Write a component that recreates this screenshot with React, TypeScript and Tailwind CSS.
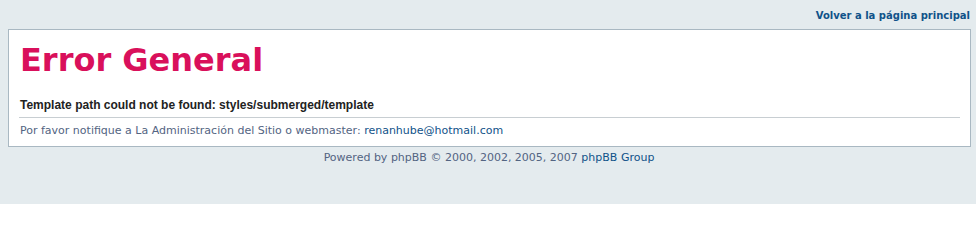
import React from 'react'

const App: React.FC = () => {
  return (
    <div className="min-h-[204px] bg-[#e4ebee] pl-2 pr-[6px] font-['DejaVu_Sans',Verdana,sans-serif]">
      {/* Top link */}
      <div className="flex h-[29px] items-start justify-end pt-[9px]">
        <a href="#" className="text-[10px] font-bold leading-[13px] text-[#105289]">
          Volver a la página principal
        </a>
      </div>

      {/* Error box */}
      <div className="mr-[-1px] border border-[#a9b8c2] bg-white px-[10px] pb-[8px]">
        <h2 className="pt-[11px] pl-[1px] text-[32px] font-bold leading-[38px] text-[#d9105b]">
          Error General
        </h2>
        <p className="mt-[19px] pl-[1px] font-['Liberation_Sans',Arial,sans-serif] text-[12px] font-bold leading-[14px] text-[#222]">
          Template path could not be found: styles/submerged/template
        </p>
        <div className="mt-[5px] border-t border-[#c8ced2] pt-[6px] pl-[1px] text-[11px] leading-[14px] text-[#536482]">
          Por favor notifique a La Administración del Sitio o webmaster:{' '}
          <a href="#" className="text-[#105289]">renanhube@hotmail.com</a>
        </div>
      </div>

      {/* Footer */}
      <div className="pt-[4px] text-center text-[11px] leading-[14px] text-[#536482]">
        Powered by phpBB © 2000, 2002, 2005, 2007{' '}
        <a href="#" className="text-[#105289]">phpBB Group</a>
      </div>
    </div>
  )
}

export default App
